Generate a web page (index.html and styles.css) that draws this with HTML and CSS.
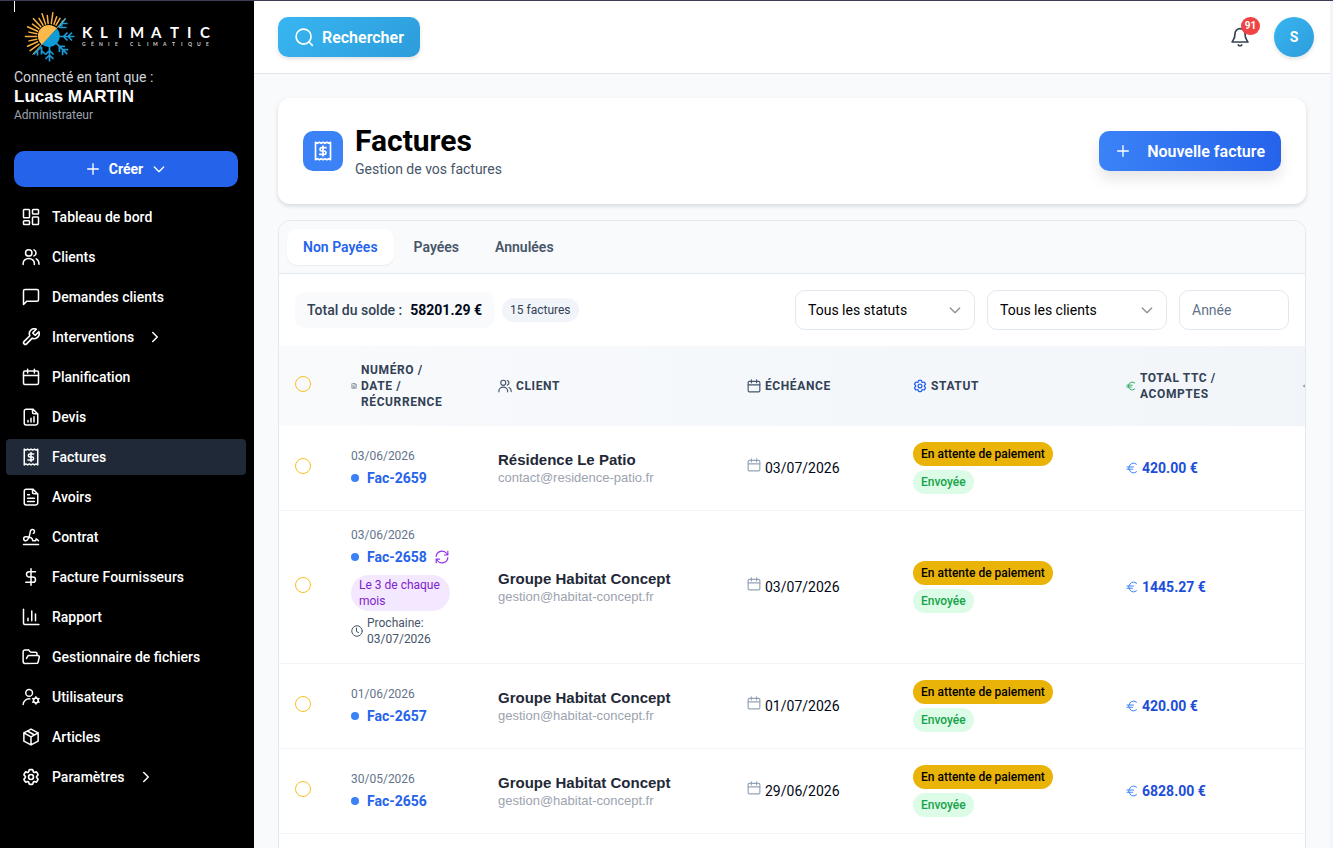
FILE: index.html
```html
<!DOCTYPE html>
<html lang="fr">
<head>
    <meta charset="UTF-8">
    <meta name="viewport" content="width=device-width, initial-scale=1.0">
    <title>Factures - Klimatic</title>
    <link rel="stylesheet" href="styles.css">
</head>
<body>

    <!-- Icon sprite -->
    <svg class="sprite" aria-hidden="true">
        <symbol id="i-dashboard" viewBox="0 0 24 24"><rect x="2" y="2" width="8" height="11" rx="1"/><rect x="14" y="2" width="8" height="6" rx="1"/><rect x="14" y="12" width="8" height="10" rx="1"/><rect x="2" y="17" width="8" height="5" rx="1"/></symbol>
        <symbol id="i-users" viewBox="0 0 24 24"><circle cx="9" cy="6.500" r="4.300"/><path d="M1.500 22v-1.500a7.500 6.500 0 0 1 15 0V22M16 2.500a4.300 4.300 0 0 1 0 8M19 14.500c2.500 1.300 3.700 4 3.700 7"/></symbol>
        <symbol id="i-message" viewBox="0 0 24 24"><path d="M22 15.500a2 2 0 0 1-2 2H6.500L2 22V4a2 2 0 0 1 2-2h16a2 2 0 0 1 2 2z"/></symbol>
        <symbol id="i-wrench" viewBox="1 1 22 22"><path d="M14.700 6.300a1 1 0 0 0 0 1.400l1.600 1.600a1 1 0 0 0 1.400 0l3.770-3.770a6 6 0 0 1-7.940 7.940l-6.910 6.910a2.120 2.120 0 0 1-3-3l6.910-6.910a6 6 0 0 1 7.940-7.940l-3.760 3.760z"/></symbol>
        <symbol id="i-calendar" viewBox="0 0 24 24"><rect x="2" y="4" width="20" height="18" rx="2"/><path d="M7.500 1.500v5M16.500 1.500v5M2 10h20"/></symbol>
        <symbol id="i-filechart" viewBox="0 0 24 24"><path d="M14.500 1.500H5.500a2.500 2.500 0 0 0-2.500 2.500v16a2.500 2.500 0 0 0 2.500 2.500h13a2.500 2.500 0 0 0 2.500-2.500V8zM14 1.500v4a2 2 0 0 0 2 2h5M8 18.500v-2M12 18.500v-5M16 18.500v-7"/></symbol>
        <symbol id="i-file" viewBox="0 0 24 24"><path d="M14.500 1.500H5.500a2.500 2.500 0 0 0-2.500 2.500v16a2.500 2.500 0 0 0 2.500 2.500h13a2.500 2.500 0 0 0 2.500-2.500V8zM14 1.500v4a2 2 0 0 0 2 2h5M7.500 9h2.500M7.500 13.500h9M7.500 18h9"/></symbol>
        <symbol id="i-receipt" viewBox="0 0 24 24"><path d="M3 1.500v21l2.250-1.300 2.250 1.300 2.250-1.300 2.250 1.300 2.250-1.300 2.250 1.300 2.250-1.300 2.250 1.300v-21l-2.250 1.300-2.250-1.300-2.250 1.300-2.250-1.300-2.250 1.300-2.250-1.300-2.250 1.300z"/><path d="M15.500 8H10.500a2 2 0 1 0 0 4h3a2 2 0 1 1 0 4H8M12 18V6"/></symbol>
        <symbol id="i-signature" viewBox="0 0 24 24"><path d="m22 17-2.500-2.200a.6.6 0 0 0-1 .5v.7a1 1 0 0 1-1 1H15a1 1 0 0 1-1-1c0-3-4-4.500-9-4.500a2.700 2.700 0 0 0 0 5.500c5 0 5.500-11 6.500-13.500a2.700 2.700 0 1 1 3.600 3.600M2 22h20"/></symbol>
        <symbol id="i-dollar" viewBox="0 0 24 24"><path d="M12 1v22M18 5H9.500a3.500 3.500 0 0 0 0 7h5a3.500 3.500 0 0 1 0 7H5"/></symbol>
        <symbol id="i-chart" viewBox="0 0 24 24"><path d="M2 1.500v18.500a2 2 0 0 0 2 2h18.500M8 17v-3.500M13 17V4M18 17V8"/></symbol>
        <symbol id="i-folder" viewBox="0 0 24 24"><path d="m6 14 1.500-2.900A2 2 0 0 1 9.240 10H21a2 2 0 0 1 1.940 2.500l-1.540 6.500a2 2 0 0 1-1.950 1.500H4a2.500 2.500 0 0 1-2.500-2.500V5a2.500 2.500 0 0 1 2.500-2.500h3.900a2 2 0 0 1 1.690.9l.81 1.200a2 2 0 0 0 1.670.9H18a2 2 0 0 1 2 2V10"/></symbol>
        <symbol id="i-usercog" viewBox="0 0 24 24"><circle cx="9.500" cy="6.500" r="4.500"/><path d="M1.500 22a8 8 0 0 1 9-7.500"/><circle cx="18.500" cy="16.500" r="3.200"/><path d="M18.500 11.700v1.600M18.500 19.700v1.600M14.300 14.100l1.400.8M21.300 18.100l1.400.8M14.300 18.900l1.400-.8M21.300 14.900l1.400-.8"/></symbol>
        <symbol id="i-box" viewBox="0 0 24 24"><path d="M12 1.500 21.500 6.500v11L12 22.500 2.500 17.500v-11zM2.500 6.500 12 11.800l9.500-5.300M12 11.800v10.700M7.200 4l9.500 5.300"/></symbol>
        <symbol id="i-gear" viewBox="1 1 22 22"><path d="M9.594 3.940c.09-.542.56-.940 1.110-.940h2.593c.55 0 1.020.398 1.110.940l.213 1.281c.063.374.313.686.645.870.074.040.147.083.220.127.325.196.720.257 1.075.124l1.217-.456a1.125 1.125 0 0 1 1.370.490l1.296 2.247a1.125 1.125 0 0 1-.260 1.431l-1.003.827c-.293.241-.438.613-.430.992a7.723 7.723 0 0 1 0 .255c-.008.378.137.750.430.991l1.004.827c.424.350.534.955.260 1.430l-1.298 2.247a1.125 1.125 0 0 1-1.369.491l-1.217-.456c-.355-.133-.750-.072-1.076.124a6.470 6.470 0 0 1-.220.128c-.331.183-.581.495-.644.869l-.213 1.281c-.090.543-.560.940-1.110.940h-2.594c-.550 0-1.019-.398-1.110-.940l-.213-1.281c-.062-.374-.312-.686-.644-.870a6.520 6.520 0 0 1-.220-.127c-.325-.196-.720-.257-1.076-.124l-1.217.456a1.125 1.125 0 0 1-1.369-.490l-1.297-2.247a1.125 1.125 0 0 1 .260-1.431l1.004-.827c.292-.240.437-.613.430-.991a6.932 6.932 0 0 1 0-.255c.007-.380-.138-.751-.430-.992l-1.004-.827a1.125 1.125 0 0 1-.260-1.430l1.297-2.247a1.125 1.125 0 0 1 1.370-.491l1.216.456c.356.133.751.072 1.076-.124.072-.044.146-.086.220-.128.332-.183.582-.495.644-.869l.214-1.280Z"/><circle cx="12" cy="12" r="3"/></symbol>
        <symbol id="i-plus" viewBox="0 0 24 24"><path d="M4 12h16M12 4v16"/></symbol>
        <symbol id="i-down" viewBox="0 0 24 24"><path d="m5 9 7 7 7-7"/></symbol>
        <symbol id="i-right" viewBox="0 0 24 24"><path d="m9 6 6 6-6 6"/></symbol>
        <symbol id="i-search" viewBox="0 0 24 24"><circle cx="11.500" cy="11.500" r="9"/><path d="m22 22-4-4"/></symbol>
        <symbol id="i-bell" viewBox="0 0 24 24"><path d="M6 8a6 6 0 0 1 12 0c0 6.500 2.500 7.500 3.500 10h-19C3.500 15.500 6 14.500 6 8M10 21.500a2.500 2.500 0 0 0 4 0"/></symbol>
        <symbol id="i-refresh" viewBox="0 0 24 24"><path d="M2 11a10 10 0 0 1 18-5l2 2.500M22 2v6.500h-6M22 13a10 10 0 0 1-18 5l-2-2.500M2 22v-6.500h6"/></symbol>
        <symbol id="i-clock" viewBox="0 0 24 24"><circle cx="12" cy="12" r="10.500"/><path d="M11 6v7l4 2"/></symbol>
        <symbol id="i-euro" viewBox="0 0 24 24"><path d="M2 10h13M2 14.500h11M21 4.500a9.500 9.500 0 1 0 0 15"/></symbol>
    </svg>

    <div class="app">
        <aside class="sidebar">
            <svg class="logo" viewBox="14 1 200 66" role="img" aria-label="Klimatic">
                <defs>
                    <path id="ray-long" d="M13 0h11"/>
                    <path id="ray-short" d="M13 0h8"/>
                    <path id="flake-arm" d="M9 0h16M14 0l4-4M14 0l4 4M18.500 0l4-4M18.500 0l4 4"/>
                </defs>
                <path d="M14.500 1v11" stroke="#fff"/>
                <g transform="translate(49.500 36.500)">
                    <g stroke="#fbb040" stroke-width="1.500" stroke-linecap="round">
                        <use href="#ray-long" transform="rotate(144)"/>
                        <use href="#ray-long" transform="rotate(156)"/>
                        <use href="#ray-short" transform="rotate(168)"/>
                        <use href="#ray-long" transform="rotate(180)"/>
                        <use href="#ray-short" transform="rotate(192)"/>
                        <use href="#ray-long" transform="rotate(204)"/>
                        <use href="#ray-short" transform="rotate(216)"/>
                        <use href="#ray-long" transform="rotate(228)"/>
                        <use href="#ray-short" transform="rotate(240)"/>
                        <use href="#ray-long" transform="rotate(252)"/>
                        <use href="#ray-short" transform="rotate(264)"/>
                        <use href="#ray-long" transform="rotate(278)"/>
                        <use href="#ray-short" transform="rotate(290)"/>
                        <use href="#ray-short" transform="rotate(300)"/>
                    </g>
                    <g fill="none" stroke="#1b9ad6" stroke-width="1.700">
                        <use href="#flake-arm"/>
                        <use href="#flake-arm" transform="rotate(45)"/>
                        <use href="#flake-arm" transform="rotate(90)"/>
                        <path d="M9-9 16-18M10-9h7M13-13h5M12-10l1-6"/>
                        <path d="M-8 10-16 18M-8 10v8M-12 14v5M-8 14l4 4"/>
                    </g>
                    <path d="M7.500-8A11 11 0 1 0-7.500 8z" fill="#fdb94a"/>
                    <path d="M7.500-8A11 11 0 0 1-7.500 8z" fill="#0f9bd7"/>
                    <path d="M-17 18 16-18" stroke="#a9b878"/>
                </g>
                <text class="logo-name" y="38" x="82 100 118 130 151 170 187 200">KLIMATIC</text>
                <text class="logo-tag" y="46" x="82 91 99 108 115 130 130 138 147 153 163 172 181 188 197 206">GÉNIE CLIMATIQUE</text>
            </svg>
            <div class="account">
                <p class="account-label">Connecté en tant que :</p>
                <p class="account-name">Lucas MARTIN</p>
                <p class="account-role">Administrateur</p>
            </div>
            <button class="create-btn" type="button">
                <svg class="icon"><use href="#i-plus"/></svg>
                Créer
                <svg class="icon"><use href="#i-down"/></svg>
            </button>
            <nav class="menu">
                <a href="#" class="menu-item"><svg class="icon"><use href="#i-dashboard"/></svg>Tableau de bord</a>
                <a href="#" class="menu-item"><svg class="icon"><use href="#i-users"/></svg>Clients</a>
                <a href="#" class="menu-item"><svg class="icon"><use href="#i-message"/></svg>Demandes clients</a>
                <a href="#" class="menu-item"><svg class="icon"><use href="#i-wrench"/></svg>Interventions<svg class="icon"><use href="#i-right"/></svg></a>
                <a href="#" class="menu-item"><svg class="icon"><use href="#i-calendar"/></svg>Planification</a>
                <a href="#" class="menu-item"><svg class="icon"><use href="#i-filechart"/></svg>Devis</a>
                <a href="#" class="menu-item active"><svg class="icon"><use href="#i-receipt"/></svg>Factures</a>
                <a href="#" class="menu-item"><svg class="icon"><use href="#i-file"/></svg>Avoirs</a>
                <a href="#" class="menu-item"><svg class="icon"><use href="#i-signature"/></svg>Contrat</a>
                <a href="#" class="menu-item"><svg class="icon"><use href="#i-dollar"/></svg>Facture Fournisseurs</a>
                <a href="#" class="menu-item"><svg class="icon"><use href="#i-chart"/></svg>Rapport</a>
                <a href="#" class="menu-item"><svg class="icon"><use href="#i-folder"/></svg>Gestionnaire de fichiers</a>
                <a href="#" class="menu-item"><svg class="icon"><use href="#i-usercog"/></svg>Utilisateurs</a>
                <a href="#" class="menu-item"><svg class="icon"><use href="#i-box"/></svg>Articles</a>
                <a href="#" class="menu-item"><svg class="icon"><use href="#i-gear"/></svg>Paramètres<svg class="icon"><use href="#i-right"/></svg></a>
            </nav>
        </aside>

        <div class="main">
            <header class="topbar">
                <button class="search-btn" type="button"><svg class="icon"><use href="#i-search"/></svg>Rechercher</button>
                <div class="topbar-right">
                    <button class="bell-btn" type="button" aria-label="Notifications">
                        <svg class="icon"><use href="#i-bell"/></svg>
                        <span class="bell-count">91</span>
                    </button>
                    <button class="avatar" type="button">S</button>
                </div>
            </header>

            <main class="content">
                <section class="page-head">
                    <span class="page-icon"><svg class="icon"><use href="#i-receipt"/></svg></span>
                    <div>
                        <h1>Factures</h1>
                        <p class="page-sub">Gestion de vos factures</p>
                    </div>
                    <button class="new-btn" type="button"><svg class="icon"><use href="#i-plus"/></svg>Nouvelle facture</button>
                </section>

                <section class="panel">
                    <div class="tabs" role="tablist">
                        <button class="tab selected" type="button" role="tab" aria-selected="true">Non Payées</button>
                        <button class="tab" type="button" role="tab" aria-selected="false">Payées</button>
                        <button class="tab" type="button" role="tab" aria-selected="false">Annulées</button>
                    </div>

                    <div class="toolbar">
                        <div class="balance">Total du solde : <strong>58201.29 €</strong></div>
                        <span class="count">15 factures</span>
                        <div class="filters">
                            <div class="select-box">
                                <select aria-label="Statut"><option>Tous les statuts</option></select>
                                <svg class="icon"><use href="#i-down"/></svg>
                            </div>
                            <div class="select-box">
                                <select aria-label="Client"><option>Tous les clients</option></select>
                                <svg class="icon"><use href="#i-down"/></svg>
                            </div>
                            <input class="year" type="text" placeholder="Année" aria-label="Année">
                        </div>
                    </div>

                    <div class="table-scroll">
                        <table class="invoices">
                            <colgroup>
                                <col class="w-check"><col class="w-number"><col class="w-client"><col class="w-due"><col class="w-status"><col class="w-total"><col class="w-more">
                            </colgroup>
                            <thead>
                                <tr>
                                    <th class="check"><input type="checkbox" aria-label="Tout sélectionner"></th>
                                    <th><div class="th th-number"><svg class="icon"><use href="#i-file"/></svg>Numéro / Date / Récurrence</div></th>
                                    <th><div class="th"><svg class="icon"><use href="#i-users"/></svg>Client</div></th>
                                    <th><div class="th"><svg class="icon"><use href="#i-calendar"/></svg>Échéance</div></th>
                                    <th><div class="th th-status"><svg class="icon"><use href="#i-gear"/></svg>Statut</div></th>
                                    <th><div class="th th-total"><svg class="icon"><use href="#i-euro"/></svg>Total TTC / Acomptes</div></th>
                                    <th><div class="th th-more"><svg class="icon"><use href="#i-euro"/></svg></div></th>
                                </tr>
                            </thead>
                            <tbody>
                                <tr>
                                    <td class="check"><input type="checkbox" aria-label="Fac-2659"></td>
                                    <td>
                                        <div class="date">03/06/2026</div>
                                        <div class="number"><span class="dot"></span><a href="#">Fac-2659</a></div>
                                    </td>
                                    <td>
                                        <div class="client">Résidence Le Patio</div>
                                        <div class="email">contact@residence-patio.fr</div>
                                    </td>
                                    <td><div class="due"><svg class="icon"><use href="#i-calendar"/></svg>03/07/2026</div></td>
                                    <td><div class="badges"><span class="badge pending">En attente de paiement</span><span class="badge sent">Envoyée</span></div></td>
                                    <td><div class="total"><svg class="icon"><use href="#i-euro"/></svg>420.00 €</div></td>
                                    <td></td>
                                </tr>
                                <tr>
                                    <td class="check"><input type="checkbox" aria-label="Fac-2658"></td>
                                    <td>
                                        <div class="date">03/06/2026</div>
                                        <div class="number"><span class="dot"></span><a href="#">Fac-2658</a><svg class="icon"><use href="#i-refresh"/></svg></div>
                                        <div class="recurrence">Le 3 de chaque mois</div>
                                        <div class="next"><svg class="icon"><use href="#i-clock"/></svg>Prochaine: 03/07/2026</div>
                                    </td>
                                    <td>
                                        <div class="client">Groupe Habitat Concept</div>
                                        <div class="email">gestion@habitat-concept.fr</div>
                                    </td>
                                    <td><div class="due"><svg class="icon"><use href="#i-calendar"/></svg>03/07/2026</div></td>
                                    <td><div class="badges"><span class="badge pending">En attente de paiement</span><span class="badge sent">Envoyée</span></div></td>
                                    <td><div class="total"><svg class="icon"><use href="#i-euro"/></svg>1445.27 €</div></td>
                                    <td></td>
                                </tr>
                                <tr>
                                    <td class="check"><input type="checkbox" aria-label="Fac-2657"></td>
                                    <td>
                                        <div class="date">01/06/2026</div>
                                        <div class="number"><span class="dot"></span><a href="#">Fac-2657</a></div>
                                    </td>
                                    <td>
                                        <div class="client">Groupe Habitat Concept</div>
                                        <div class="email">gestion@habitat-concept.fr</div>
                                    </td>
                                    <td><div class="due"><svg class="icon"><use href="#i-calendar"/></svg>01/07/2026</div></td>
                                    <td><div class="badges"><span class="badge pending">En attente de paiement</span><span class="badge sent">Envoyée</span></div></td>
                                    <td><div class="total"><svg class="icon"><use href="#i-euro"/></svg>420.00 €</div></td>
                                    <td></td>
                                </tr>
                                <tr>
                                    <td class="check"><input type="checkbox" aria-label="Fac-2656"></td>
                                    <td>
                                        <div class="date">30/05/2026</div>
                                        <div class="number"><span class="dot"></span><a href="#">Fac-2656</a></div>
                                    </td>
                                    <td>
                                        <div class="client">Groupe Habitat Concept</div>
                                        <div class="email">gestion@habitat-concept.fr</div>
                                    </td>
                                    <td><div class="due"><svg class="icon"><use href="#i-calendar"/></svg>29/06/2026</div></td>
                                    <td><div class="badges"><span class="badge pending">En attente de paiement</span><span class="badge sent">Envoyée</span></div></td>
                                    <td><div class="total"><svg class="icon"><use href="#i-euro"/></svg>6828.00 €</div></td>
                                    <td></td>
                                </tr>
                            </tbody>
                        </table>
                    </div>
                </section>
            </main>
        </div>
    </div>

</body>
</html>
```
FILE: styles.css
```css
* {
    box-sizing: border-box;
}

body {
    margin: 0;
    font-family: Roboto, "Liberation Sans", sans-serif;
    font-size: 14px;
    line-height: 20px;
    color: #020817;
    background: #f8fafc;
}

h1, p {
    margin: 0;
}

button, input, select {
    font-family: inherit;
    font-size: 14px;
}

button {
    border: none;
    cursor: pointer;
}

a {
    color: inherit;
    text-decoration: none;
}

.sprite {
    display: none;
}

.icon {
    width: 16px;
    height: 16px;
    flex-shrink: 0;
    fill: none;
    stroke: currentColor;
    stroke-width: 2;
    stroke-linecap: round;
    stroke-linejoin: round;
}

.app {
    display: flex;
    height: 100vh;
    padding-right: 3px;
    border-top: 1px solid #3f3a56;
    background: #f1f5f9;
}

/* Sidebar */
.sidebar {
    width: 254px;
    flex-shrink: 0;
    background: #000;
    color: #fff;
    overflow: hidden;
}

.logo {
    display: block;
    width: 200px;
    height: 66px;
    margin-left: 14px;
    fill: none;
}

.logo-name {
    font-family: Lato, sans-serif;
    font-size: 15px;
    font-weight: 700;
    fill: #fff;
}

.logo-tag {
    font-family: Lato, sans-serif;
    font-size: 5px;
    font-weight: 700;
    fill: #d4d4d4;
}

.account {
    padding: 0 14px;
}

.account-label {
    color: #d1d5db;
}

.account-name {
    font-family: "Liberation Sans", Arial, sans-serif;
    font-size: 17px;
    font-weight: 700;
}

.account-role {
    font-size: 12px;
    line-height: 16px;
    color: #9ca3af;
}

.create-btn {
    display: flex;
    align-items: center;
    justify-content: center;
    gap: 8px;
    width: 224px;
    height: 36px;
    margin: 28px 14px 12px;
    border-radius: 10px;
    background: #2563eb;
    color: #fff;
    font-weight: 700;
}

.menu {
    display: flex;
    flex-direction: column;
    gap: 4px;
    padding: 0 8px 0 6px;
}

.menu-item {
    display: flex;
    align-items: center;
    gap: 12px;
    height: 36px;
    padding: 0 16px;
    border-radius: 4px;
    font-weight: 500;
}

.menu-item.active {
    background: #1f2937;
}

.menu-item .icon {
    width: 18px;
    height: 18px;
}

/* Top bar */
.main {
    flex: 1;
    min-width: 0;
    overflow-y: auto;
    scrollbar-width: none;
    background: #f8fafc;
}

.topbar {
    display: flex;
    align-items: center;
    justify-content: space-between;
    padding: 16px 16px 16px 24px;
    background: #fff;
    border-bottom: 1px solid #e5e7eb;
}

.search-btn {
    display: flex;
    align-items: center;
    gap: 8px;
    height: 40px;
    padding: 0 16px;
    border-radius: 10px;
    background: linear-gradient(135deg, #38b6f1, #2d9cdb);
    box-shadow: 0 2px 4px rgba(0, 0, 0, 0.12);
    color: #fff;
    font-size: 16px;
    font-weight: 600;
}

.search-btn .icon, .bell-btn .icon {
    width: 20px;
    height: 20px;
}

.topbar-right {
    display: flex;
    gap: 14px;
}

.bell-btn {
    position: relative;
    display: flex;
    align-items: center;
    justify-content: center;
    width: 40px;
    height: 40px;
    padding: 0;
    background: none;
    color: #374151;
}

.bell-count {
    position: absolute;
    top: 0;
    right: 0;
    min-width: 19px;
    border-radius: 9px;
    background: #ef4444;
    color: #fff;
    font-size: 10px;
    font-weight: 700;
    line-height: 18px;
    text-align: center;
}

.avatar {
    width: 40px;
    height: 40px;
    border-radius: 50%;
    background: linear-gradient(135deg, #38b6f1, #2d9cdb);
    box-shadow: 0 2px 4px rgba(0, 0, 0, 0.12);
    color: #fff;
    font-weight: 700;
}

/* Page header */
.content {
    display: flex;
    flex-direction: column;
    gap: 16px;
    padding: 24px;
}

.page-head {
    display: flex;
    align-items: center;
    gap: 12px;
    padding: 25px;
    border-radius: 12px;
    background: #fff;
    box-shadow: 0 2px 4px rgba(15, 23, 42, 0.14);
}

.page-icon {
    display: flex;
    align-items: center;
    justify-content: center;
    width: 40px;
    height: 40px;
    border-radius: 10px;
    background: #3b82f6;
    color: #fff;
}

.page-icon .icon {
    width: 20px;
    height: 20px;
}

h1 {
    font-size: 30px;
    line-height: 36px;
    font-weight: 700;
    color: #000;
}

.page-sub {
    color: #475569;
}

.new-btn {
    display: flex;
    align-items: center;
    gap: 16px;
    height: 40px;
    margin-left: auto;
    padding: 0 16px;
    border-radius: 10px;
    background: linear-gradient(90deg, #3b82f6, #2563eb);
    box-shadow: 0 8px 14px rgba(0, 0, 0, 0.1);
    color: #fff;
    font-size: 16px;
    font-weight: 600;
}

/* Invoice panel */
.panel {
    border: 1px solid #e2e8f0;
    border-radius: 12px;
    background: #fff;
    overflow: hidden;
}

.tabs {
    display: flex;
    gap: 4px;
    padding: 8px;
    background: #f8fafc;
    border-bottom: 1px solid #e2e8f0;
}

.tab {
    height: 36px;
    padding: 0 16px;
    border-radius: 10px;
    background: none;
    color: #475569;
    font-weight: 600;
}

.tab.selected {
    background: #fff;
    box-shadow: 0 1px 2px rgba(0, 0, 0, 0.06);
    color: #2563eb;
}

.toolbar {
    display: flex;
    align-items: center;
    gap: 8px;
    padding: 16px;
}

.balance {
    display: flex;
    gap: 8px;
    padding: 8px 12px;
    border-radius: 10px;
    background: #f8fafc;
    color: #334155;
    font-weight: 500;
}

.balance strong {
    font-weight: 700;
    color: #020817;
}

.count {
    padding: 4px 8px;
    border-radius: 12px;
    background: #f1f5f9;
    color: #334155;
    font-size: 12px;
    line-height: 16px;
}

.filters {
    display: flex;
    gap: 12px;
    margin-left: auto;
}

.select-box {
    position: relative;
}

.select-box select, .year {
    height: 40px;
    padding: 0 12px;
    border: 1px solid #e2e8f0;
    border-radius: 10px;
    background: #fff;
    color: #000;
}

.select-box select {
    width: 180px;
    appearance: none;
}

.select-box .icon {
    position: absolute;
    top: 12px;
    right: 12px;
    color: #8b8f96;
    pointer-events: none;
}

.year {
    width: 110px;
}

.year::placeholder {
    color: #64748b;
}

/* Table */
.table-scroll {
    padding-bottom: 64px;
    overflow-x: auto;
}

.invoices {
    width: 100%;
    min-width: 1100px;
    table-layout: fixed;
    border-collapse: collapse;
}

.w-check { width: 56px; }
.w-number { width: 147px; }
.w-client { width: 249px; }
.w-due { width: 166px; }
.w-status { width: 213px; }
.w-total { width: 177px; }

.invoices th, .invoices td {
    padding: 16px;
    text-align: left;
    vertical-align: middle;
}

.invoices thead {
    background: linear-gradient(90deg, #f8fafc, #f1f5f9);
}

.invoices tbody tr {
    border-bottom: 1px solid #f1f5f9;
}

.invoices .check {
    padding-bottom: 20px;
    line-height: 0;
}

.check input {
    appearance: none;
    width: 16px;
    height: 16px;
    margin: 0;
    border: 1px solid #fbbf24;
    border-radius: 50%;
}

.th {
    display: flex;
    align-items: center;
    gap: 4px;
    color: #334155;
    font-size: 12px;
    line-height: 16px;
    font-weight: 700;
    letter-spacing: 0.05em;
    text-transform: uppercase;
}

.th .icon {
    width: 14px;
    height: 14px;
    color: #475569;
}

.th-number {
    max-width: 100px;
}

.th-number .icon {
    width: 6px;
    height: 6px;
}

.th-status .icon {
    color: #2563eb;
}

.th-total .icon {
    width: 10px;
    height: 10px;
    color: #16a34a;
}

.th-more .icon {
    width: 4px;
    height: 4px;
}

.date {
    margin-bottom: 4px;
    color: #64748b;
    font-size: 12px;
    line-height: 16px;
}

.number {
    display: flex;
    align-items: center;
    gap: 8px;
    color: #2563eb;
    font-weight: 700;
}

.dot {
    width: 8px;
    height: 8px;
    border-radius: 50%;
    background: #3b82f6;
}

.number .icon {
    width: 14px;
    height: 14px;
    color: #9333ea;
}

.recurrence {
    max-width: 99px;
    margin: 8px 0 4px;
    padding: 2px 8px;
    border-radius: 18px;
    background: #f3e8ff;
    color: #7e22ce;
    font-size: 12px;
    line-height: 16px;
}

.next {
    display: flex;
    align-items: center;
    gap: 4px;
    color: #475569;
    font-size: 12px;
    line-height: 16px;
}

.next .icon {
    width: 12px;
    height: 12px;
}

.client {
    font-family: "Liberation Sans", Arial, sans-serif;
    font-size: 15px;
    font-weight: 700;
    color: #1f2937;
}

.email {
    font-family: "Liberation Sans", Arial, sans-serif;
    font-size: 13px;
    line-height: 16px;
    color: #9ca3af;
}

.due {
    display: flex;
    gap: 4px;
}

.due .icon {
    width: 14px;
    height: 14px;
    color: #94a3b8;
}

.badges {
    display: flex;
    flex-direction: column;
    align-items: flex-start;
    gap: 4px;
}

.badge {
    padding: 4px 8px;
    border-radius: 12px;
    font-size: 12px;
    line-height: 16px;
    font-weight: 500;
}

.pending {
    background: #eab308;
    color: #000;
}

.sent {
    background: #dcfce7;
    color: #16a34a;
}

.total {
    display: flex;
    align-items: center;
    gap: 4px;
    color: #1d4ed8;
    font-weight: 700;
}

.total .icon {
    width: 12px;
    height: 12px;
    color: #3b82f6;
}
```
